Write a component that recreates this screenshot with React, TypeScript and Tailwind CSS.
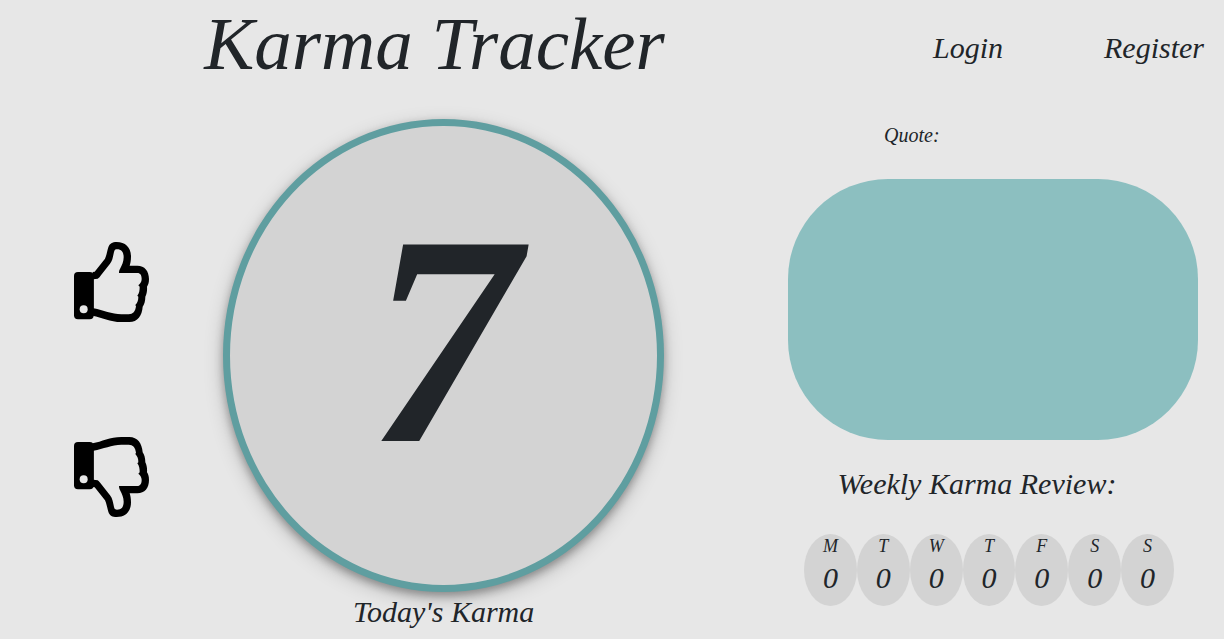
const days = ["M", "T", "W", "T", "F", "S", "S"];

const handPath =
  "M128 156 L134 155 L165 116 C170 105 171 95 175 82 C179 70 187 66 200 66 C226 66 243 82 243 110 C243 122 241 130 239 137 L262 137 C284 137 297 153 297 177 C297 189 294 195 291 200 C292 212 290 222 286 230 C286 243 283 253 278 260 C276 287 263 306 238 306 L214 306 C180 306 155 292 128 287 Z M131 178 L143 176 C147 174 150 169 154 164 L180 131 C188 122 189 108 192 96 C194 89 196 88 201 88 C215 88 221 97 221 112 C221 125 216 135 211 145 C208 150 207 154 207 159 L262 159 C271 159 275 166 275 177 C275 185 271 191 265 196 L269 200 C269 211 268 219 262 227 L265 230 C265 241 263 247 256 255 L258 259 C256 275 249 283 236 283 L214 283 C185 283 160 270 131 265 Z";

function ThumbUp() {
  return (
    <svg viewBox="72 66 225 240" className="h-20 w-[75px]" aria-hidden="true">
      <path d={handPath} fillRule="evenodd" />
      <rect x="72" y="156" width="59" height="142" rx="12" />
      <circle cx="101" cy="268" r="12" fill="#e7e7e7" />
    </svg>
  );
}

function ThumbDown() {
  return (
    <svg viewBox="72 651 225 240" className="h-20 w-[75px]" aria-hidden="true">
      <path d={handPath} fillRule="evenodd" transform="translate(0 957) scale(1 -1)" />
      <rect x="72" y="666" width="59" height="142" rx="12" />
      <circle cx="101" cy="778" r="12" fill="#e7e7e7" />
    </svg>
  );
}

export default function App() {
  return (
    <div className="min-h-screen bg-[#e7e7e7] font-['Satisfy','Liberation_Serif',serif] text-[#212529] italic">
      <header className="flex h-[119px] items-start">
        <h1 className="w-[71%] text-center text-[75px] leading-[88px]">Karma Tracker</h1>
        <nav className="flex flex-1 justify-between pt-7 pr-5 pl-16 text-[30px] leading-10">
          <a href="#login">Login</a>
          <a href="#register">Register</a>
        </nav>
      </header>

      <main className="grid grid-cols-[18.25%_36%_1fr]">
        <div className="flex flex-col items-center gap-[115px] pt-[123px] text-black">
          <button type="button" aria-label="Good karma">
            <ThumbUp />
          </button>
          <button type="button" aria-label="Bad karma">
            <ThumbDown />
          </button>
        </div>

        <section className="text-center">
          <div className="flex h-[473px] items-center justify-center rounded-[50%] border-[7px] border-[#5f9ea0] bg-[#d3d3d3] pb-8 shadow-[0_4px_8px_0_rgba(0,0,0,0.3),0_6px_20px_0_rgba(0,0,0,0.19)]">
            <span className="text-[300px] leading-none font-bold">7</span>
          </div>
          <h2 className="text-[30px] leading-10">Today's Karma</h2>
        </section>

        <aside className="pr-[26px] pl-[124px]">
          <h3 className="pl-24 text-xl leading-8">Quote:</h3>
          <div className="mt-7 h-[261px] rounded-[100px] bg-[#8cbfc0]" />
          <h2 className="pt-6 pr-8 text-center text-[30px] leading-10">Weekly Karma Review:</h2>
          <ul className="mt-[30px] mr-6 ml-4 grid grid-cols-7">
            {days.map((day, i) => (
              <li key={i} className="h-[72px] rounded-[50%] bg-[#d3d3d3] text-center">
                <div className="text-lg leading-6">{day}</div>
                <div className="text-[30px] leading-10">0</div>
              </li>
            ))}
          </ul>
        </aside>
      </main>
    </div>
  );
}
